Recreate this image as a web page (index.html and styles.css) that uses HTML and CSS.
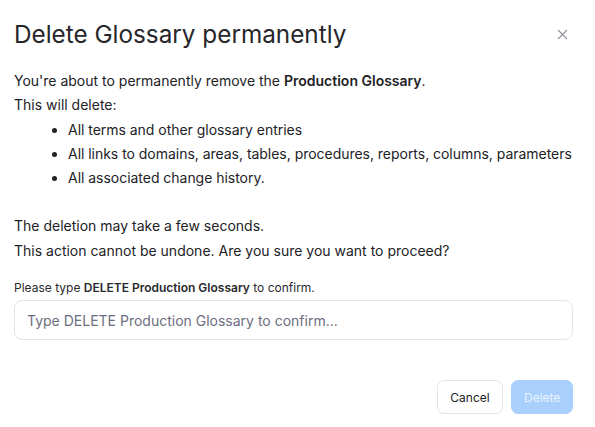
FILE: index.html
```html
<!DOCTYPE html>
<html>
<head>
<meta charset="utf-8">
<link rel="stylesheet" href="styles.css">
</head>
<body>
<div class="dialog">
  <div class="header">
    <h1 class="title">Delete Glossary permanently</h1>
    <button class="close" aria-label="Close">
      <svg width="11" height="11" viewBox="0 0 11 11"><path d="M1 1L10 10M10 1L1 10" stroke="#8e90a0" stroke-width="1.1" fill="none"/></svg>
    </button>
  </div>
  <div class="body">
    <p class="line">You're about to permanently remove the <strong>Production Glossary</strong>.</p>
    <p class="line">This will delete:</p>
    <ul class="list">
      <li>All terms and other glossary entries</li>
      <li>All links to domains, areas, tables, procedures, reports, columns, parameters</li>
      <li>All associated change history.</li>
    </ul>
    <p class="line spaced">The deletion may take a few seconds.</p>
    <p class="line">This action cannot be undone. Are you sure you want to proceed?</p>
  </div>
  <label class="label">Please type <strong>DELETE Production Glossary</strong> to confirm.</label>
  <input class="input" type="text" placeholder="Type DELETE Production Glossary to confirm...">
  <div class="footer">
    <button class="btn cancel">Cancel</button>
    <button class="btn delete" disabled>Delete</button>
  </div>
</div>
</body>
</html>
```

FILE: styles.css
```css
* { box-sizing: border-box; }
html, body { margin: 0; padding: 0; background: #ffffff; }
body {
  font-family: Inter, "Noto Sans", sans-serif;
  color: #222226;
  width: 595px;
  height: 427px;
  overflow: hidden;
}
.dialog {
  display: flex;
  flex-direction: column;
  padding: 20px 22px 0 14px;
}
.header {
  display: flex;
  align-items: center;
  justify-content: space-between;
  height: 28px;
}
.title {
  margin: 0;
  font-size: 24.3px;
  font-weight: 400;
  line-height: 28px;
  color: #27272b;
}
.close {
  border: none;
  background: none;
  padding: 0;
  width: 11px;
  height: 11px;
  display: flex;
  margin-right: 5px;
}
.body {
  margin-top: 21px;
  font-size: 14px;
  line-height: 24.3px;
  white-space: nowrap;
}
.line { margin: 0; }
.line strong { font-weight: 600; }
.spaced { margin-top: 24px; }
.list {
  margin: 0;
  padding-left: 54px;
  letter-spacing: -0.03px;
}
.label {
  margin-top: 17px;
  font-size: 12px;
  line-height: 16px;
  color: #2a2a2e;
}
.label strong { font-weight: 600; }
.input {
  margin-top: 4px;
  width: 559px;
  height: 40px;
  border: 1px solid #e4e4e7;
  border-radius: 8px;
  padding: 0 12px;
  font-family: inherit;
  font-size: 14px;
  color: #222;
  outline: none;
}
.input::placeholder { color: #6c6e80; }
.footer {
  display: flex;
  justify-content: flex-end;
  gap: 8px;
  margin-top: 40px;
  width: 559px;
}
.btn {
  height: 34px;
  border-radius: 7px;
  font-family: inherit;
  font-size: 12px;
  padding: 0 12px;
}
.cancel {
  background: #ffffff;
  border: 1px solid #e4e4e7;
  color: #222226;
  width: 66px;
}
.delete {
  background: #a9cffd;
  border: 1px solid #a9cffd;
  color: #eaf3ff;
  width: 62px;
}
```
